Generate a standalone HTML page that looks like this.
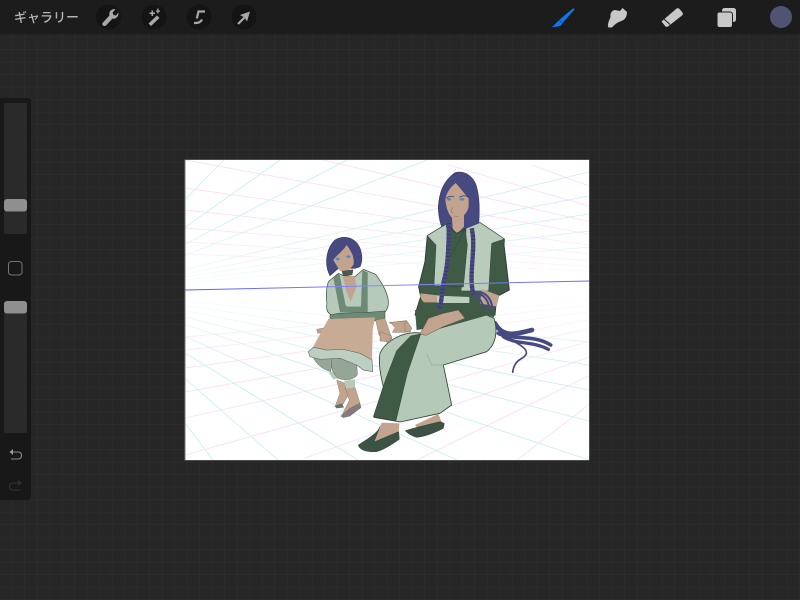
<!DOCTYPE html>
<html><head><meta charset="utf-8"><style>
html,body{margin:0;padding:0;width:800px;height:600px;overflow:hidden;background:#262626}
svg{position:absolute;left:0;top:0}
</style></head><body>
<svg width="800" height="600" viewBox="0 0 800 600" xmlns="http://www.w3.org/2000/svg">
<defs>
<pattern id="gr" width="12.5" height="12.5" patternUnits="userSpaceOnUse" x="0" y="0">
<path d="M12.5 0V12.5M0 12.5H12.5" stroke="#2e2e2e" stroke-width="1.200" fill="none"/>
</pattern>
<clipPath id="cv"><rect x="185.500" y="160" width="403.500" height="300"/></clipPath>
<linearGradient id="hz" x1="0" x2="1" y1="0" y2="0"><stop offset="0" stop-color="#5a5cf0"/><stop offset=".5" stop-color="#8a8cf5"/><stop offset="1" stop-color="#6a6cf0"/></linearGradient>
<linearGradient id="fd" x1="0" x2="0" y1="0" y2="1"><stop offset="0" stop-color="#fff" stop-opacity="0"/><stop offset=".4" stop-color="#fff" stop-opacity=".75"/><stop offset=".5" stop-color="#fff" stop-opacity=".97"/><stop offset=".62" stop-color="#fff" stop-opacity=".75"/><stop offset="1" stop-color="#fff" stop-opacity="0"/></linearGradient>
</defs>
<rect width="800" height="600" fill="#262626"/>
<rect width="800" height="600" fill="url(#gr)"/>
<rect width="800" height="34" fill="#1c1c1c"/>
<text x="14" y="22" font-family="'Liberation Sans','Noto Sans CJK JP',sans-serif" font-size="13" font-weight="500" fill="#b4b4b4">ギャラリー</text>
<circle cx="108.500" cy="17" r="12.500" fill="#141414"/><circle cx="154" cy="17" r="12.500" fill="#141414"/><circle cx="199" cy="17" r="12.500" fill="#141414"/><circle cx="244" cy="17" r="12.500" fill="#141414"/>
<g fill="#a8a8a8" stroke="none">
<path d="M102.500 23L109.500 15.500C108.500 12 111 8.500 115.500 9L112.500 12.500L113.500 15L116 15.500L118.500 12.500C119 16.500 115.500 19.500 112.500 18.500L106 25.500C104 27 101.500 25 102.500 23Z"/>
<path d="M148.500 23.500L157 15.500L159.500 18L151 26Z"/>
<path d="M149.500 12.500H151.500V10.500H153V12.500H155V14H153V16H151.500V14H149.500ZM156 10.500H157.200V8.500H158.500V10.500H160V11.800H158.500V13.500H157.200V11.800H156Z"/>
</g>
<path d="M205 11.500H198.500L196.800 18.500M194 23C197 23 200.500 23 202 19.500" fill="none" stroke="#a8a8a8" stroke-width="2.200"/>
<path d="M238 24L244.500 17.500" stroke="#a8a8a8" stroke-width="2.200"/>
<path d="M250 11.500L247 21.500L244.500 17.500L240 15Z" fill="#a8a8a8"/>
<path d="M573.500 8L574.500 9.500L562.500 23L559 20Z" fill="#0a78f0"/>
<path d="M559 20.500L562.500 23.500C561 26.500 556 27 551.500 27C555 25.500 556 22 559 20.500Z" fill="#0a78f0"/>
<path d="M608 27C607.500 23 609.500 20 610.500 17C610 13.500 611.500 10.500 615 10L620 11L622.500 8L627 12C627 16 625.500 19 622.500 20.500C618.500 22 615.500 23.500 612.500 27C611 27.800 608.800 27.800 608 27Z" fill="#c8c8c8"/>
<path d="M661.500 21.500L676 9C677 8 678.500 8 679.500 9L682.500 12.500C683 13.500 683 14.500 682 15.500L668 26.500C667 27 666 27 665.500 26.500Z" fill="#c8c8c8"/>
<path d="M664 19L670 24.500" stroke="#1c1c1c" stroke-width="1"/>
<rect x="722" y="8" width="14" height="14" rx="2.500" fill="#c8c8c8"/>
<rect x="717" y="12" width="15.500" height="15.500" rx="2.500" fill="#c8c8c8" stroke="#1c1c1c" stroke-width="1"/>
<circle cx="781" cy="17" r="11" fill="#505372"/>
<path d="M0 98H27Q31 98 31 102V496Q31 500 27 500H0Z" fill="#181818"/>
<rect x="4" y="103" width="23" height="131" rx="2" fill="#2a2a2a"/>
<rect x="4" y="199" width="23" height="12.500" rx="3" fill="#8f8f8f"/>
<rect x="8.500" y="261.500" width="13.500" height="13.500" rx="3" fill="none" stroke="#757575" stroke-width="1"/>
<rect x="4" y="302" width="23" height="131" rx="2" fill="#2a2a2a"/>
<rect x="4" y="301" width="23" height="12.500" rx="3" fill="#8f8f8f"/>
<path d="M11 452H18C20.500 452 21.500 453.500 21.500 455.500C21.500 457.500 20.500 459 18 459H11" fill="none" stroke="#888" stroke-width="1.100"/>
<path d="M9.500 452L13 449V455Z" fill="#999"/>
<path d="M20 483H13C10.500 483 9.500 484.500 9.500 486.500C9.500 488.500 10.500 490 13 490H20M18 480.500L21 483L18 485.500" fill="none" stroke="#333" stroke-width="1.100"/>
<rect x="184.500" y="159.500" width="405" height="301" fill="#777"/>
<rect x="185.500" y="160" width="403.500" height="300" fill="#fff"/>
<g clip-path="url(#cv)" fill="none">
<g stroke="#fadcf8" stroke-width=".8">
<path d="M185 160L850 282M323 160L850 282M448 165L850 282M532 165L850 282M185 188L850 282M185 210L850 282M185 228L850 282M185 242L850 282M185 254L850 282"/>
<path d="M185 337L800 282M185 350L800 282M185 368L800 282M185 392L800 282M185 418L800 282M185 455L800 282M305 458L800 282M417 460L780 282M517 460L748 282"/>
</g>
<g stroke="#c4f0e9" stroke-width=".8">
<path d="M95 291L224 160M95 291L280 160M95 291L347 160M95 291L427 160M95 291L589 172M95 291L589 196M95 291L589 214M95 291L589 231M95 291L589 247"/>
<path d="M85 291L213 460M85 291L278 460M85 291L358 460M85 291L457 460M85 291L589 460M85 291L589 421M85 291L589 390M85 291L589 365M85 291L589 342"/>
</g>
<rect x="185" y="215" width="405" height="150" fill="url(#fd)"/>
</g>

<!-- man upper -->
<g transform="translate(300,165) scale(.33333)" stroke-linejoin="round">
<path d="M415 125C418 85 428 50 465 23C495 15 525 35 532 75C540 110 538 150 535 200L505 205L445 205L425 185C418 165 415 145 415 125Z" fill="#474a80" stroke="#363960" stroke-width="2"/>
<path d="M436 105C437 85 452 66 467 54C480 68 492 85 506 100L506 125C502 145 488 158 465 163C447 158 439 130 436 105Z" fill="#c2a48e"/>
<path d="M456 158L492 150L492 185L470 208L458 190Z" fill="#c2a48e"/>
<path d="M438 100Q452 90 462 96M478 97Q492 88 505 96" fill="none" stroke="#363960" stroke-width="2.500"/>
<ellipse cx="447" cy="103" rx="6" ry="3.500" fill="#4f87c0"/><ellipse cx="486" cy="103" rx="7" ry="3.500" fill="#4f87c0"/>
<path d="M458 125L453 140L462 143M462 155H475" fill="none" stroke="#8a6f60" stroke-width="1.500"/>
<path d="M382 212L438 178L470 205L500 190L540 173L613 222L612 240L628 375L590 395L585 450H345L362 395L356 365L375 290Z" fill="#3f5b46" stroke="#2f4236" stroke-width="3"/>
<path d="M382 212L438 178L442 200L433 362L402 362L408 240Z" fill="#b9ccbc" stroke="#2f4236" stroke-width="1.500"/>
<path d="M498 190L540 173L613 222L575 235L566 378L483 378L497 240Z" fill="#b9ccbc" stroke="#2f4236" stroke-width="1.500"/>
<path d="M495 192L470 240L436 300L436 362L490 366L502 240Z" fill="#3f5b46" stroke="#2f4236" stroke-width="1.500"/>
<path d="M362 385L420 392V412H372C362 402 358 392 362 385Z" fill="#c2a48e"/>
<path d="M410 392L508 396L508 414L413 414Z" fill="#bdd0c0"/>
<path d="M545 372L598 392L590 425L540 415Z" fill="#c2a48e"/>
<g fill="none">
<path d="M447 175C445 225 448 290 430 354C425 390 425 420 412 448" stroke="#474a80" stroke-width="13"/>
<path d="M447 175C445 225 448 290 430 354C425 390 425 420 412 448" stroke="#2f3258" stroke-width="13" stroke-dasharray="2 9"/>
<path d="M515 190C527 240 512 300 515 354C516 372 518 380 522 392" stroke="#474a80" stroke-width="13"/>
<path d="M515 190C527 240 512 300 515 354C516 372 518 380 522 392" stroke="#2f3258" stroke-width="13" stroke-dasharray="2 9"/>
<path d="M525 385C550 385 570 405 570 450M535 380C565 385 580 410 578 450M528 392C545 405 553 425 555 450" stroke="#474a80" stroke-width="6"/>
</g>
</g>
<!-- man lower -->
<g transform="translate(300,310) scale(.33333)" stroke-linejoin="round">
<g fill="none" stroke="#474a80" stroke-linecap="round">
<path d="M585 40C610 85 650 72 696 60" stroke-width="14"/>
<path d="M595 70C640 92 700 72 752 105" stroke-width="11"/>
<path d="M610 80C650 105 695 92 745 118" stroke-width="10"/>
<path d="M620 85C680 110 695 130 662 147C647 156 640 170 638 187" stroke-width="5"/>
</g>
<path d="M240 130C255 95 310 60 365 70L560 15L582 25C592 55 592 100 560 125L430 165L455 285L420 310L300 336L222 322L250 230C240 190 235 155 240 130Z" fill="#b5c9b9" stroke="#2f4236" stroke-width="2.500"/>
<path d="M332 78L362 72L322 190L288 332L220 320L258 205L290 122Z" fill="#3f5b46" stroke="#2f4236" stroke-width="1.500"/>
<path d="M345 0H585L582 22L560 15L430 50L350 60Z" fill="#3f5b46"/>
<path d="M360 72L385 25L430 10L475 0L495 25L430 50L378 76Z" fill="#c2a48e" stroke="#5a4a40" stroke-width="1.500"/>
<path d="M268 38L320 32L335 55L330 66L280 66L300 52Z" fill="#c2a48e" stroke="#6a5a50" stroke-width="1.500"/>
<path d="M380 130L395 165L430 165" fill="none" stroke="#8a9e90" stroke-width="1.500"/>
<path d="M245 338L298 340L296 368L222 396Z" fill="#c2a48e"/>
<path d="M240 350C232 370 205 385 175 405C178 420 200 427 230 425C255 418 280 400 298 388L296 365L222 396Z" fill="#3c5343" stroke="#2f4236" stroke-width="1.500"/>
<path d="M345 345L415 312L425 336L350 352Z" fill="#c2a48e"/>
<path d="M350 352L420 335L433 340L430 355C405 368 375 380 350 382C335 378 322 370 316 362Z" fill="#3c5343" stroke="#2f4236" stroke-width="1.500"/>
</g>
<!-- child -->
<g transform="translate(305,235) scale(.33333)" stroke-linejoin="round">
<path d="M75 122C58 90 62 42 90 15C115 0 150 5 165 40C172 60 172 80 165 95L150 100L100 100Z" fill="#474a80" stroke="#363960" stroke-width="2"/>
<path d="M85 75C95 60 112 50 125 30C140 50 150 70 145 90L130 108H105Z" fill="#c2a48e"/>
<ellipse cx="98" cy="72" rx="6" ry="4" fill="#4f87c0"/><ellipse cx="130" cy="65" rx="6" ry="4" fill="#4f87c0"/>
<path d="M110 108L145 103L142 120L115 125Z" fill="#4a5a50"/>
<path d="M70 140L100 115L115 122L150 125L175 103L212 118C232 145 252 180 250 208C248 225 240 235 225 238L210 240L195 250L90 248L80 240C68 235 62 225 66 205C62 180 64 160 70 140Z" fill="#b6cabb" stroke="#33463a" stroke-width="2"/>
<path d="M85 127L103 115L122 212L168 212L172 105L188 112L188 232H105Z" fill="#6f8a74"/>
<path d="M114 125L148 122L155 155L137 200L124 170Z" fill="#c2a48e"/>
<path d="M122 168L137 205L157 155L168 215H125Z" fill="#b6cabb"/>
<path d="M75 240L100 235L190 232L240 228L240 250L210 258L100 258L75 250Z" fill="#6f8a74" stroke="#33463a" stroke-width="1.500"/>
<path d="M212 255L240 250L262 315L245 322L222 300Z" fill="#c2a48e" stroke="#6a5a50" stroke-width="1"/>
<path d="M75 250L100 258L70 290L38 295L35 283L60 278Z" fill="#c2a48e" stroke="#6a5a50" stroke-width="1"/>
<path d="M255 262L300 258L300 292L262 292L270 278Z" fill="#c2a48e" stroke="#6a5a50" stroke-width="1"/>
</g>
<g transform="translate(300,310) scale(.33333)" stroke-linejoin="round">
<path d="M85 27L225 22L218 60L216 155L170 130L120 118L35 118Z" fill="#c7ab95"/>
<path d="M240 65L275 78L270 95L240 93Z" fill="#c2a48e" stroke="#6a5a50" stroke-width="1"/>
<path d="M110 210L135 220L145 255L125 290L105 290L120 250Z" fill="#c2a48e" stroke="#6a5a50" stroke-width="1"/>
<path d="M104 288L125 280L132 292L110 295Z" fill="#5e7468"/>
<path d="M135 232L165 232L180 280L150 300L125 318L148 270Z" fill="#c2a48e" stroke="#6a5a50" stroke-width="1"/>
<path d="M122 318L150 295L180 280L183 293L150 318L130 323Z" fill="#847a80" stroke="#5a5258" stroke-width="1"/>
<path d="M132 212L165 208L165 232L138 236Z" fill="#b6cabb"/>
<path d="M86 188L105 182L115 205L100 208Z" fill="#b6cabb"/>
<path d="M40 142L95 135C96 150 95 170 92 185C70 178 50 165 40 142Z" fill="#95a697" stroke="#5a6a5e" stroke-width="1.500"/>
<path d="M95 140L170 158L172 195C160 210 135 212 115 205C100 195 90 170 95 140Z" fill="#95a697" stroke="#5a6a5e" stroke-width="1.500"/>
<path d="M25 125L40 112L80 120L130 118L180 130L216 150L218 185L190 180L170 165L120 145L60 148L30 140Z" fill="#bccfc0" stroke="#5f7468" stroke-width="2"/>
</g>
<path d="M185.500 290Q390 285 589 281" stroke="url(#hz)" stroke-width="1" fill="none"/>
</svg>
</body></html>
